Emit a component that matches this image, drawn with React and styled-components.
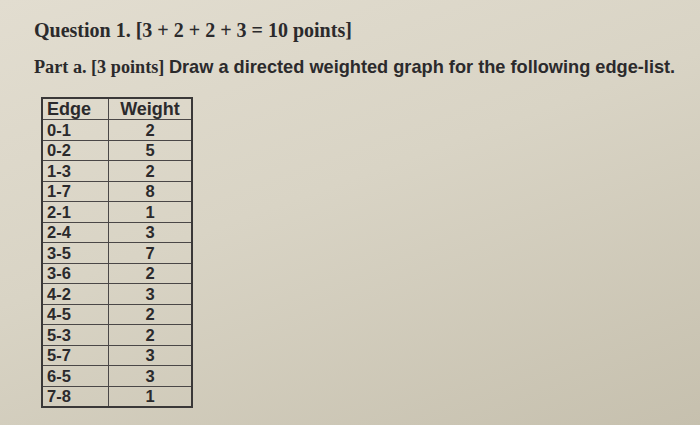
import React from "react";
import styled, { createGlobalStyle } from "styled-components";

const GlobalStyle = createGlobalStyle`
  html, body { margin: 0; padding: 0; }
  body { width: 700px; height: 425px; overflow: hidden; }
`;

const edges = [
  ["0-1", 2], ["0-2", 5], ["1-3", 2], ["1-7", 8], ["2-1", 1], ["2-4", 3], ["3-5", 7],
  ["3-6", 2], ["4-2", 3], ["4-5", 2], ["5-3", 2], ["5-7", 3], ["6-5", 3], ["7-8", 1],
];

const Paper = styled.div`
  width: 700px;
  height: 425px;
  box-sizing: border-box;
  padding: 18px 0 0 34px;
  background: linear-gradient(160deg, #e2ddd0 0%, #d9d4c5 45%, #c6c0ae 100%);
  color: #2b2a2c;
`;

const Question = styled.h1`
  margin: 0;
  font-family: "Liberation Serif", serif;
  font-weight: bold;
  font-size: 20px;
  line-height: 24px;
`;

const PartLine = styled.p`
  margin: 14px 0 0;
  font-size: 18.2px;
  line-height: 22px;
  font-weight: bold;
`;

const Serif = styled.span`
  font-family: "Liberation Serif", serif;
`;

const Sans = styled.span`
  font-family: "Liberation Sans", Arial, sans-serif;
`;

const Table = styled.table`
  margin: 19px 0 0 7px;
  border-collapse: collapse;
  font-family: "Liberation Sans", Arial, sans-serif;
  font-weight: bold;
  border: 2px solid #3a3838;
`;

const Cell = styled.td`
  border: 1.5px solid #4a4747;
  height: ${(p) => (p.$head ? "20px" : "19.5px")};
  padding: 0 4px;
  font-size: ${(p) => (p.$head ? "18px" : "16.5px")};
  line-height: 18px;
  text-align: ${(p) => (p.$center ? "center" : "left")};
  width: ${(p) => (p.$center ? "74px" : "57px")};
`;

export default function App() {
  return (
    <>
      <GlobalStyle />
      <Paper>
        <Question>Question 1. [3 + 2 + 2 + 3 = 10 points]</Question>
        <PartLine>
          <Serif>Part a. [3 points]</Serif>{" "}
          <Sans>Draw a directed weighted graph for the following edge-list.</Sans>
        </PartLine>
        <Table>
          <tbody>
            <tr>
              <Cell $head>Edge</Cell>
              <Cell $head $center>Weight</Cell>
            </tr>
            {edges.map(([e, w]) => (
              <tr key={e}>
                <Cell>{e}</Cell>
                <Cell $center>{w}</Cell>
              </tr>
            ))}
          </tbody>
        </Table>
      </Paper>
    </>
  );
}
